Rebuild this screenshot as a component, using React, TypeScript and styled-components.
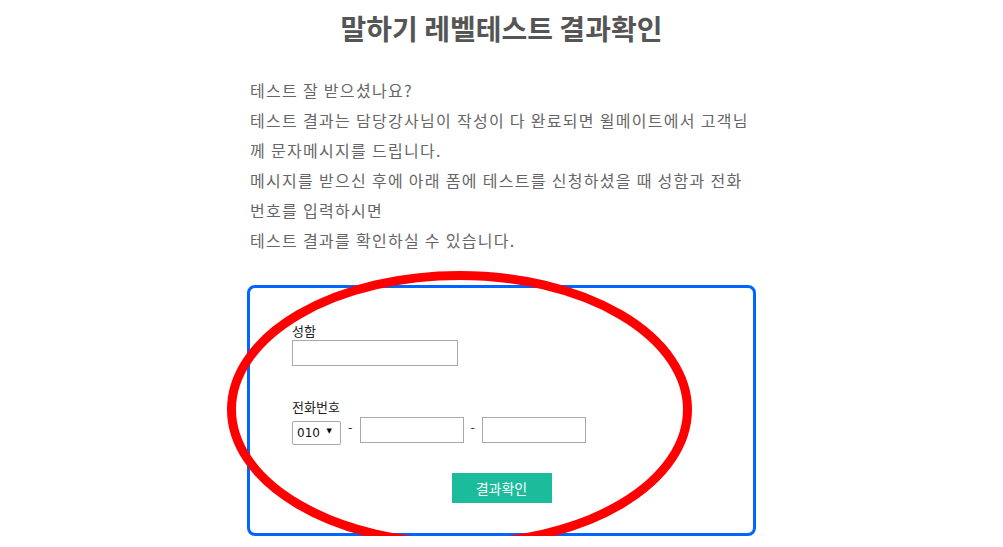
import styled, { createGlobalStyle } from 'styled-components';

const GlobalStyle = createGlobalStyle`
  html, body {
    margin: 0;
    padding: 0;
    background: #fff;
  }
  body {
    font-family: "Noto Sans CJK KR", "Noto Sans", sans-serif;
  }
`;

const Page = styled.div`
  width: 1003px;
  padding-top: 8px;
`;

const Title = styled.h1`
  margin: 0;
  text-align: center;
  font-size: 28px;
  line-height: 40px;
  font-weight: 700;
  color: #555;
`;

const Content = styled.div`
  width: 509px;
  margin: 27px auto 0;
`;

const Intro = styled.div`
  padding-left: 3px;
  font-size: 16px;
  line-height: 30px;
  letter-spacing: 1.3px;
  color: #666;

  p {
    margin: 0;
  }
`;

const FormBox = styled.form`
  position: relative;
  margin-top: 30px;
  border: 3px solid #0066ff;
  border-radius: 8px;
  padding: 33px 42px 30px;
`;

const Field = styled.div<{ gapTop?: number }>`
  margin-top: ${p => p.gapTop ?? 0}px;
`;

const Label = styled.label<{ gapBottom?: number }>`
  display: block;
  font-size: 13px;
  line-height: 19px;
  color: #222;
  margin-bottom: ${p => p.gapBottom ?? 0}px;
`;

const TextInput = styled.input<{ w: number }>`
  box-sizing: border-box;
  display: block;
  width: ${p => p.w}px;
  height: 26px;
  margin: 0;
  border: 1px solid #a9a9a9;
  padding: 2px 4px;
  font-size: 13px;
  outline: none;
`;

const PhoneRow = styled.div`
  display: flex;
  align-items: center;
  gap: 7px;
`;

const SelectWrap = styled.div`
  position: relative;
  width: 49px;
  height: 24px;
`;

const Select = styled.select`
  appearance: none;
  box-sizing: border-box;
  width: 100%;
  height: 100%;
  margin: 0;
  border: 1px solid #a9a9a9;
  border-radius: 2px;
  background: #fff;
  padding: 0 0 0 4px;
  font-family: "DejaVu Sans", "Liberation Sans", sans-serif;
  font-size: 12px;
  font-weight: 400;
  color: #111;
  outline: none;
`;

const Arrow = styled.span`
  position: absolute;
  right: 9px;
  top: 7px;
  font-family: "DejaVu Sans", sans-serif;
  font-size: 7px;
  line-height: 12px;
  color: #000;
  pointer-events: none;
`;

const Dash = styled.span`
  font-size: 13px;
  line-height: 16px;
  color: #333;
  margin-top: -6px;
`;

const SubmitRow = styled.div`
  display: flex;
  justify-content: center;
  margin-top: 30px;
`;

const SubmitButton = styled.button`
  width: 100px;
  height: 30px;
  border: none;
  background: #1abc9c;
  color: #fff;
  font-family: "Noto Sans CJK KR", sans-serif;
  font-size: 14px;
  cursor: pointer;
`;

// red hand-drawn style ring laid over the form
const Annotation = styled.svg`
  position: absolute;
  left: -27px;
  top: -22px;
  overflow: visible;
  pointer-events: none;
`;

export default function App() {
  return (
    <Page>
      <GlobalStyle />
      <Title>말하기 레벨테스트 결과확인</Title>
      <Content>
        <Intro>
          <p>테스트 잘 받으셨나요?</p>
          <p>테스트 결과는 담당강사님이 작성이 다 완료되면 윌메이트에서 고객님<br />께 문자메시지를 드립니다.</p>
          <p>메시지를 받으신 후에 아래 폼에 테스트를 신청하셨을 때 성함과 전화<br />번호를 입력하시면</p>
          <p>테스트 결과를 확인하실 수 있습니다.</p>
        </Intro>
        <FormBox onSubmit={e => e.preventDefault()}>
          <Field>
            <Label>성함</Label>
            <TextInput w={166} type="text" />
          </Field>
          <Field gapTop={31}>
            <Label gapBottom={1}>전화번호</Label>
            <PhoneRow>
              <SelectWrap>
                <Select defaultValue="010">
                  <option value="010">010</option>
                  <option value="011">011</option>
                  <option value="016">016</option>
                  <option value="017">017</option>
                  <option value="019">019</option>
                </Select>
                <Arrow>▼</Arrow>
              </SelectWrap>
              <Dash>-</Dash>
              <TextInput w={104} type="text" />
              <Dash>-</Dash>
              <TextInput w={104} type="text" />
            </PhoneRow>
          </Field>
          <SubmitRow>
            <SubmitButton type="submit">결과확인</SubmitButton>
          </SubmitRow>
          <Annotation width={468} height={280} viewBox="0 0 468 280">
            <ellipse cx={236.5} cy={143.5} rx={228} ry={134} fill="none" stroke="#ff0000" strokeWidth={9} />
          </Annotation>
        </FormBox>
      </Content>
    </Page>
  );
}
